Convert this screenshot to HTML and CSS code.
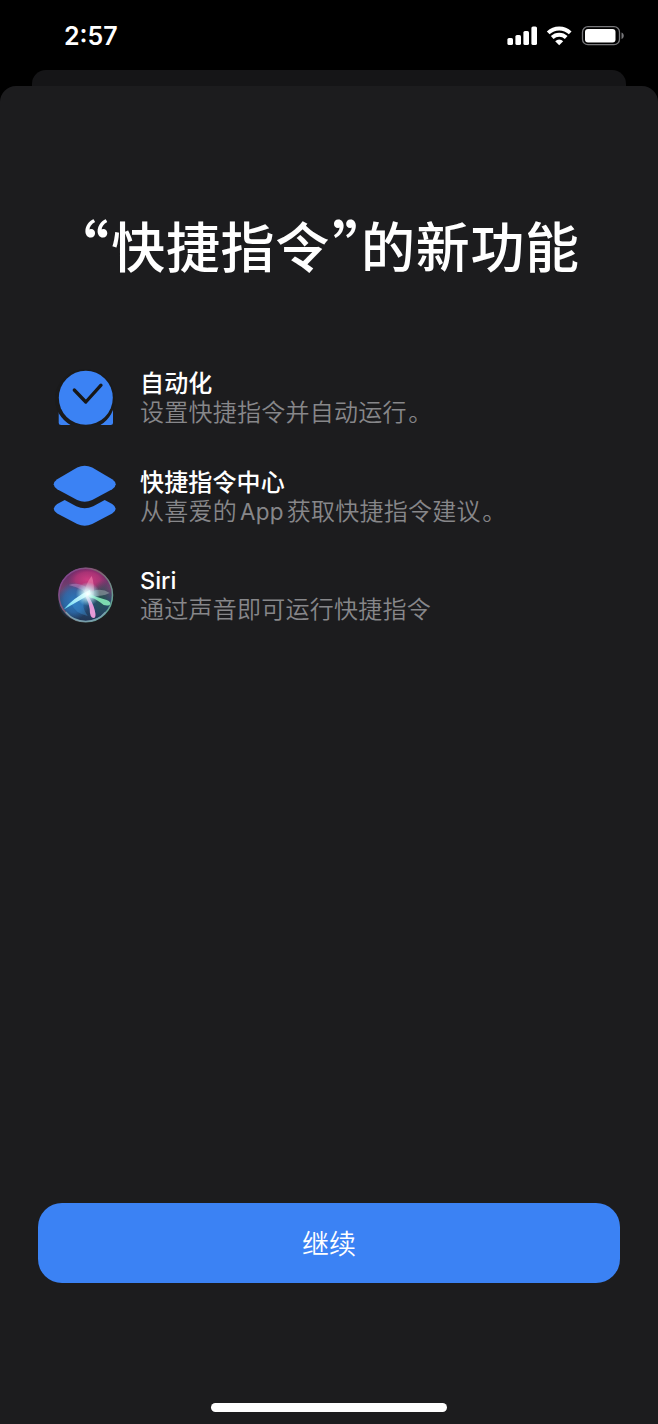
FILE: index.html
```html
<!DOCTYPE html>
<html lang="zh-CN">
<head>
<meta charset="utf-8">
<title>快捷指令</title>
<link rel="stylesheet" href="styles.css">
</head>
<body>
<div class="phone">
  <header class="status">
    <span class="time">2:57</span>
    <svg class="signals" width="118" height="22" viewBox="0 0 118 22">
      <g fill="#fff">
        <rect x="1.400" y="13" width="5.600" height="7" rx="1.600"/>
        <rect x="9.400" y="10" width="5.600" height="10" rx="1.600"/>
        <rect x="17.400" y="6" width="5.600" height="14" rx="1.600"/>
        <rect x="25.400" y="1.500" width="5.600" height="18.500" rx="1.600"/>
        <path d="M53.200 20.300l4-4.100a5.800 5.800 0 0 0-8 0z"/>
      </g>
      <g fill="none" stroke="#fff" stroke-width="3.900">
        <path d="M42.200 7.900a15.800 15.800 0 0 1 22 0"/>
        <path d="M46.200 12.500a10.100 10.100 0 0 1 14 0"/>
      </g>
      <rect x="76.500" y="1.700" width="37" height="18" rx="5.500" fill="none" stroke="#77777a" stroke-width="1.300"/>
      <rect x="79" y="4" width="30.500" height="13.600" rx="3" fill="#fff"/>
      <path d="M115.500 7.500c3 1 3 5.500 0 6.500z" fill="#77777a"/>
    </svg>
  </header>
  <div class="behind"></div>
  <main class="sheet">
    <h1 class="title"><span class="open">“</span>快捷指令<span class="close">”</span>的新功能</h1>
    <ul class="features">
      <li class="feature">
        <svg class="icon" width="64" height="64" viewBox="0 0 64 64">
          <path d="M5.700 42v14.500q0 2.500 2.500 2.500h49.300q2.500 0 2.500-2.500V42z" fill="#3b82f4"/>
          <path d="M2 30a30.200 30.200 0 0 1 60 0v3a30.200 30.200 0 0 1-14.600 26H17.500A30.200 30.200 0 0 1 2 33z" fill="#1a1a1b"/>
          <circle cx="32.800" cy="31.800" r="27" fill="#3b82f4"/>
          <path d="M21.300 24L32.800 36l15.200-16.800" fill="none" stroke="#171718" stroke-width="3.300" stroke-linecap="round" stroke-linejoin="round"/>
        </svg>
        <div class="copy"><h2>自动化</h2><p>设置快捷指令并自动运行<span class="stop">。</span></p></div>
      </li>
      <li class="feature">
        <svg class="icon" width="64" height="64" viewBox="0 0 64 64">
          <g fill="#3b82f4" transform="translate(.7 -.3)">
            <path d="M23.500 2.700q7.500-3.500 15 0L58.500 14.500q7 5 0 10L38.500 35.300q-7.500 3.500-15 0L3.500 24.500q-7-5 0-10z"/>
            <path d="M11 35.200L3.500 39.200q-7 4.800 0 9.600L23.500 59.300q7.500 3.500 15 0l20-10.500q7-4.800 0-9.600L51 35.200 39.500 41.500q-8.500 4.200-17 0z"/>
          </g>
        </svg>
        <div class="copy"><h2>快捷指令中心</h2><p>从喜爱的<span class="latin">App</span>获取快捷指令建议<span class="stop">。</span></p></div>
      </li>
      <li class="feature">
        <svg class="icon" width="64" height="64" viewBox="0 0 64 64">
          <defs>
            <linearGradient id="orb" x1="0" y1="0" x2="0" y2="1">
              <stop offset="0" stop-color="#6b2768"/><stop offset=".4" stop-color="#70436f"/><stop offset=".65" stop-color="#285078"/><stop offset="1" stop-color="#203351"/>
            </linearGradient>
            <linearGradient id="rim" x1="0" y1="0" x2="1" y2=".7">
              <stop offset="0" stop-color="#843c9c"/><stop offset=".5" stop-color="#80606f"/><stop offset="1" stop-color="#63a997"/>
            </linearGradient>
            <radialGradient id="pink"><stop offset="0" stop-color="#cf3c82"/><stop offset=".6" stop-color="#b83478" stop-opacity=".8"/><stop offset="1" stop-color="#a62b72" stop-opacity="0"/></radialGradient>
            <radialGradient id="blue"><stop offset="0" stop-color="#2c78bc"/><stop offset=".6" stop-color="#2c6cae" stop-opacity=".8"/><stop offset="1" stop-color="#2867a8" stop-opacity="0"/></radialGradient>
            <radialGradient id="green"><stop offset="0" stop-color="#26534f"/><stop offset="1" stop-color="#204d50" stop-opacity="0"/></radialGradient>
            <radialGradient id="glow"><stop offset="0" stop-color="#fff"/><stop offset=".35" stop-color="#d7ffff" stop-opacity=".8"/><stop offset="1" stop-color="#99eef8" stop-opacity="0"/></radialGradient>
            <linearGradient id="ray" x1="1" y1="0" x2="0" y2="1"><stop offset="0" stop-color="#fff"/><stop offset="1" stop-color="#62dcf4"/></linearGradient>
          </defs>
          <g transform="translate(.7 0)">
            <circle cx="32" cy="32" r="27.200" fill="url(#orb)"/>
            <ellipse cx="34" cy="17" rx="20" ry="13" fill="url(#pink)"/>
            <ellipse cx="20" cy="38" rx="16" ry="19" fill="url(#blue)"/>
            <ellipse cx="48" cy="36" rx="11" ry="19" fill="url(#green)"/>
            <path d="M15 22q14-5 25 9l-5 3q-5-9-20-12z" fill="#b483be" opacity=".55"/>
            <path d="M30 33q2-13 8-20 3 8 2 20z" fill="#e878a8" opacity=".7"/>
            <path d="M32 31q14-8 24-1-9 4-21 3z" fill="#8f9aa0" opacity=".65"/>
            <path d="M31 33q-4 11 3 20-13-3-16-12z" fill="#3c91d4" opacity=".4"/>
            <path d="M34 30q10 5 19 7 5 2 3 5-5 2-10-3-5-4-11-5z" fill="#7cdcb0"/>
            <path d="M33 31q6 8 8 16 2 8-1 8-4 0-4-9-1-7-4-12z" fill="#e59ad8"/>
            <path d="M37 31Q23 39 10 46.500q10-12 26-19.500z" fill="url(#ray)"/>
            <circle cx="34" cy="31" r="12" fill="url(#glow)"/>
            <circle cx="32" cy="32" r="26.800" fill="none" stroke="url(#rim)" stroke-width="1.500"/>
            <path d="M12 49a26 26 0 0 0 40 0" fill="none" stroke="#789fae" stroke-width="1.300"/>
          </g>
        </svg>
        <div class="copy"><h2 class="siri">Siri</h2><p>通过声音即可运行快捷指令</p></div>
      </li>
    </ul>
    <button class="continue" type="button">继续</button>
    <div class="home"></div>
  </main>
</div>
</body>
</html>
```

FILE: styles.css
```css
* { box-sizing: border-box; margin: 0; padding: 0; }
body {
  background: #000;
  color: #fff;
  font-family: Inter, "Noto Sans CJK SC", sans-serif;
}
.phone { display: flex; flex-direction: column; width: 658px; height: 1424px; overflow: hidden; }
.status {
  display: flex;
  justify-content: space-between;
  height: 70px;
  padding: 21px 34px 0 64px;
}
.time { font-size: 25px; font-weight: 600; line-height: 30px; }
.signals { margin-top: 4px; }
.behind { height: 16px; margin: 0 32px; background: #151517; border-radius: 14px 14px 0 0; }
.sheet {
  display: flex;
  flex: 1;
  flex-direction: column;
  background: #1c1c1e;
  border-radius: 16px 16px 0 0;
  padding: 119px 38px 12px;
}
.title {
  height: 80px;
  font-family: "Noto Sans CJK SC", sans-serif;
  font-size: 54px;
  font-weight: 500;
  line-height: 80px;
  letter-spacing: .7px;
  text-align: center;
  white-space: nowrap;
}
.open, .close { font-size: 62px; line-height: 1; letter-spacing: 0; font-feature-settings: "halt"; vertical-align: -5px; }
.open { margin-right: 2px; }
.close { margin-left: 2px; margin-right: -2px; }
.features { display: flex; flex-direction: column; gap: 34.500px; margin-top: 81px; padding-left: 15px; list-style: none; }
.feature { display: flex; align-items: center; gap: 23px; height: 64px; }
.icon { flex: none; }
.copy { font-family: Inter, "Noto Sans CJK SC", sans-serif; white-space: nowrap; }
.copy h2 { font-size: 24px; font-weight: 500; line-height: 29px; letter-spacing: .15px; }
.copy p { color: #87878a; font-size: 24px; font-weight: 350; line-height: 29px; letter-spacing: .25px; }
.copy .siri { font-size: 23.500px; letter-spacing: 0; }
.stop { margin-left: 1.500px; }
.latin { margin: 0 3px; font-size: 22.500px; font-weight: 400; }
.continue {
  height: 80px;
  margin-top: auto;
  border: 0;
  border-radius: 24px;
  background: #3b82f4;
  color: #fff;
  font-family: "Noto Sans CJK SC", sans-serif;
  font-size: 27px;
  font-weight: 350;
  padding-bottom: 2px;
}
.home { align-self: center; width: 236px; height: 9px; margin-top: 120px; border-radius: 5px; background: #fff; }
```
